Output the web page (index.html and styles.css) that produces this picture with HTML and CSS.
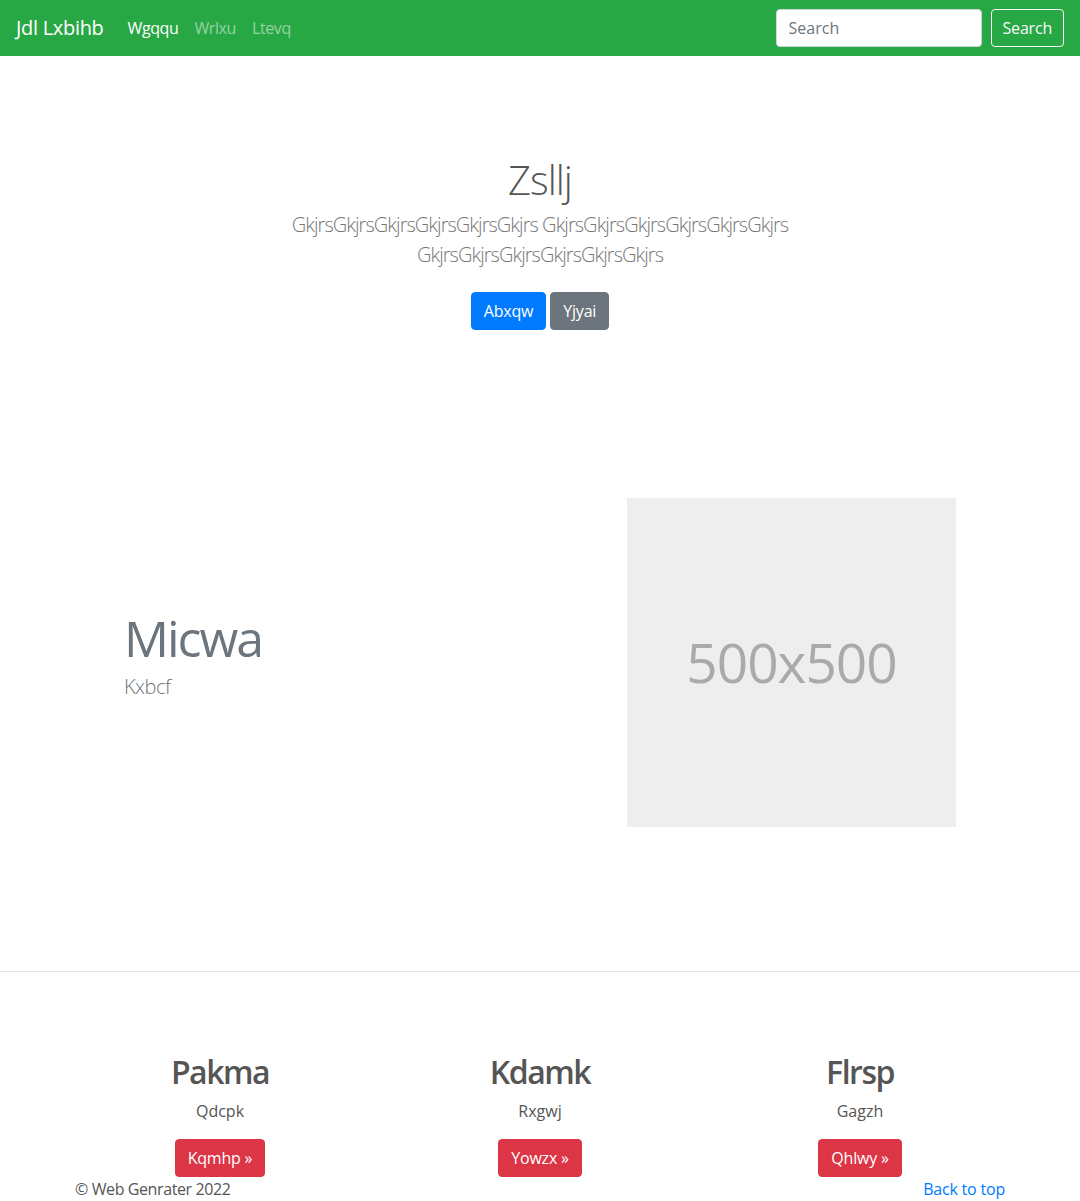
FILE: index.html
```html
<!DOCTYPE html>
<html lang="en">
<head>
<meta charset="utf-8">
<title>Jdl Lxbihb</title>
<link rel="stylesheet" href="styles.css">
</head>
<body>
<nav class="navbar">
  <a class="brand" href="#">Jdl Lxbihb</a>
  <ul class="nav-links">
    <li><a class="nav-link active" href="#">Wgqqu</a></li>
    <li><a class="nav-link" href="#">Wrlxu</a></li>
    <li><a class="nav-link" href="#">Ltevq</a></li>
  </ul>
  <form class="search">
    <input class="search-input" type="text" placeholder="Search">
    <button class="btn btn-outline-light" type="button">Search</button>
  </form>
</nav>

<main>
  <section class="hero">
    <h1 class="hero-title">Zsllj</h1>
    <p class="lead hero-lead">GkjrsGkjrsGkjrsGkjrsGkjrsGkjrs GkjrsGkjrsGkjrsGkjrsGkjrsGkjrs GkjrsGkjrsGkjrsGkjrsGkjrsGkjrs</p>
    <p class="hero-actions">
      <a class="btn btn-primary" href="#">Abxqw</a>
      <a class="btn btn-secondary" href="#">Yjyai</a>
    </p>
  </section>

  <section class="featurette">
    <div class="feat-text">
      <h2 class="feat-heading">Micwa</h2>
      <p class="lead feat-lead">Kxbcf</p>
    </div>
    <div class="feat-img">500x500</div>
  </section>

  <hr class="divider">

  <section class="cols">
    <div class="col">
      <h2 class="col-title">Pakma</h2>
      <p class="col-text">Qdcpk</p>
      <p class="col-action"><a class="btn btn-danger" href="#">Kqmhp »</a></p>
    </div>
    <div class="col">
      <h2 class="col-title">Kdamk</h2>
      <p class="col-text">Rxgwj</p>
      <p class="col-action"><a class="btn btn-danger" href="#">Yowzx »</a></p>
    </div>
    <div class="col">
      <h2 class="col-title">Flrsp</h2>
      <p class="col-text">Gagzh</p>
      <p class="col-action"><a class="btn btn-danger" href="#">Qhlwy »</a></p>
    </div>
  </section>

  <footer class="footer">
    <p class="copy">© Web Genrater 2022</p>
    <a class="back-top" href="#">Back to top</a>
  </footer>
</main>
</body>
</html>
```

FILE: styles.css
```css
* { box-sizing: border-box; }

body {
  margin: 0;
  font-family: "Open Sans", "Noto Sans", "Liberation Sans", sans-serif;
  font-size: 16px;
  line-height: 1.5;
  color: #555;
  background: #fff;
}

a { text-decoration: none; }

.navbar {
  display: flex;
  align-items: center;
  height: 56px;
  padding: 0 16px;
  background: #28a745;
}

.brand {
  font-size: 20px;
  line-height: 30px;
  color: #fff;
  margin-right: 16px;
  letter-spacing: -0.3px;
}

.nav-links {
  display: flex;
  list-style: none;
  margin: 0;
  padding: 0;
  flex: 1;
}

.nav-link {
  display: block;
  padding: 8px;
  color: rgba(255, 255, 255, 0.5);
  letter-spacing: -0.4px;
}

.nav-link.active { color: #fff; }

.search {
  display: flex;
  align-items: center;
  gap: 9px;
}

.search-input {
  width: 206px;
  height: 38px;
  padding: 6px 12px;
  font: inherit;
  color: #495057;
  border: 1px solid #ced4da;
  border-radius: 4px;
  background: #fff;
}

.search-input::placeholder { color: #6c757d; }

.btn {
  display: inline-block;
  padding: 6px 12px;
  font: inherit;
  font-size: 16px;
  line-height: 24px;
  border: 1px solid transparent;
  border-radius: 4px;
  color: #fff;
  cursor: pointer;
  letter-spacing: -0.2px;
}

.btn-outline-light {
  background: transparent;
  border-color: #f8f9fa;
  color: #f8f9fa;
  padding: 6px 11px;
}

.btn-primary { background: #007bff; border-color: #007bff; }
.btn-secondary { background: #6c757d; border-color: #6c757d; }
.btn-danger { background: #dc3545; border-color: #dc3545; }

.hero {
  text-align: center;
  padding-top: 100px;
}

.hero-title {
  margin: 0 0 6px;
  font-size: 40px;
  font-weight: 300;
  line-height: 1.2;
  letter-spacing: -1px;
  color: #555;
}

.lead {
  font-size: 20px;
  font-weight: 300;
  letter-spacing: -0.95px;
}

.hero-lead {
  max-width: 600px;
  margin: 0 auto 22px;
  color: #777;
}

.hero-actions {
  margin: 0;
  display: flex;
  justify-content: center;
  gap: 4px;
}

.featurette {
  width: 832px;
  margin: 168px auto 0;
  display: grid;
  grid-template-columns: 473px 329px;
  column-gap: 30px;
  align-items: center;
}

.feat-heading {
  margin: 0 0 4px;
  font-size: 50px;
  font-weight: 400;
  line-height: 1.2;
  letter-spacing: -2px;
  color: #6c757d;
}

.feat-lead {
  margin: 0 0 16px;
  color: #6c757d;
  letter-spacing: -0.5px;
}

.feat-img {
  width: 329px;
  height: 329px;
  background: #eee;
  color: #aaa;
  font-size: 55px;
  letter-spacing: -1px;
  display: flex;
  align-items: center;
  justify-content: center;
}

.divider {
  margin: 144px 0 0;
  border: 0;
  border-top: 1px solid #e3e3e3;
}

.cols {
  width: 960px;
  margin: 81px auto 0;
  display: grid;
  grid-template-columns: repeat(3, 1fr);
  text-align: center;
}

.col-title {
  margin: 0 0 8px;
  font-size: 32px;
  font-weight: 600;
  line-height: 1.2;
  letter-spacing: -1.5px;
  color: #555;
}

.col-text { margin: 0 0 16px; }

.col-action { margin: 0; }

.footer {
  width: 960px;
  margin: 0 auto;
  padding: 0 15px;
  display: flex;
  justify-content: space-between;
}

.copy { margin: 0; letter-spacing: -0.4px; }

.back-top { color: #007bff; letter-spacing: -0.2px; }
```
